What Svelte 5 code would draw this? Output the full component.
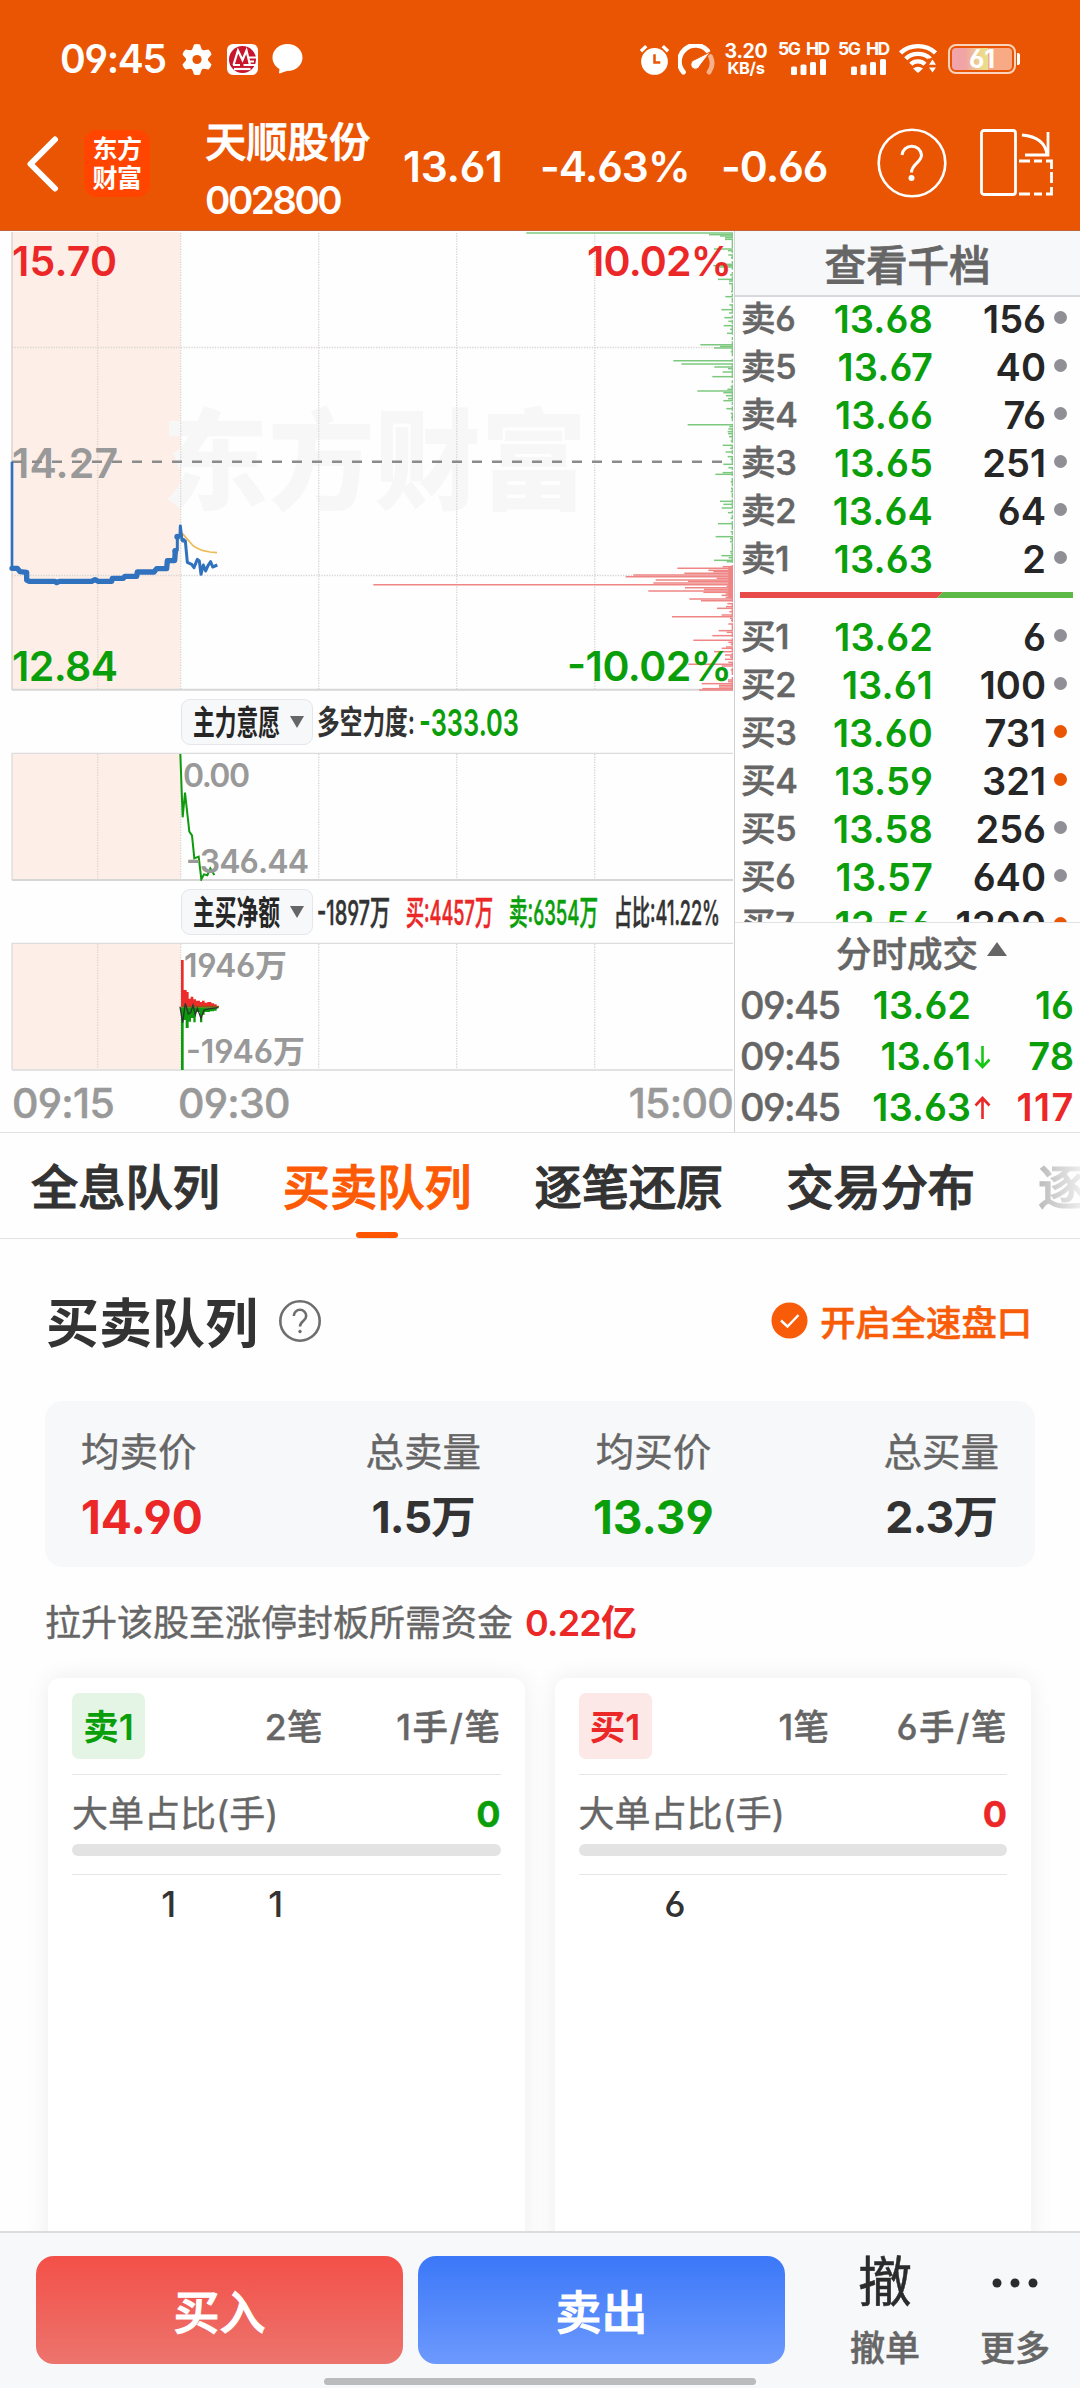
<script>
  const sells = [
    ['卖6', '13.68', '156'],
    ['卖5', '13.67', '40'],
    ['卖4', '13.66', '76'],
    ['卖3', '13.65', '251'],
    ['卖2', '13.64', '64'],
    ['卖1', '13.63', '2'],
  ];
  const buys = [
    ['买1', '13.62', '6'],
    ['买2', '13.61', '100'],
    ['买3', '13.60', '731', true],
    ['买4', '13.59', '321', true],
    ['买5', '13.58', '256'],
    ['买6', '13.57', '640'],
    ['买7', '13.56', '1300', true],
  ];
  const trades = [
    { price: '13.62', qty: '16', dir: '' },
    { price: '13.61', qty: '78', dir: 'down' },
    { price: '13.63', qty: '117', dir: 'up' },
  ];
  const tabs = ['全息队列', '买卖队列', '逐笔还原', '交易分布', '逐笔成交'];
  const stats = [
    [
      { label: '均卖价', value: '14.90', tone: 'red' },
      { label: '总卖量', value: '1.5万', tone: 'total' },
    ],
    [
      { label: '均买价', value: '13.39', tone: 'green' },
      { label: '总买量', value: '2.3万', tone: 'total' },
    ],
  ];
  const queues = [
    { side: 'sell', name: '卖1', count: '2笔', avg: '1手/笔', orders: ['1', '1'] },
    { side: 'buy', name: '买1', count: '1笔', avg: '6手/笔', orders: ['6'] },
  ];

  // Order depth bars: [y, left edge], in thirds of a pixel; the right edge is fixed.
  const askDepth = [
    [24, 499], [29, 1047], [33, 1080], [38, 1095], [43, 1095], [72, 1062], [77, 1104], [90, 1105], [98, 1113], [118, 1080], [122, 1060], [126, 1075], [150, 1110],
    [163, 1074], [168, 1107], [176, 1107], [200, 1113], [215, 1096], [240, 1108], [254, 1084], [264, 1107], [278, 1093], [289, 1105], [302, 1091],
    [313, 1110], [325, 1101], [359, 1021], [364, 1080], [369, 1062], [380, 1112], [407, 940], [417, 964], [426, 1063], [431, 1104], [441, 1088],
    [455, 1057], [485, 1112], [493, 1102], [498, 1012], [503, 1090], [512, 1098], [521, 1104], [527, 1090], [551, 1099], [565, 1112], [577, 1113], [599, 983], [605, 1108], [612, 1105], [620, 1103], [626, 1104],
    [635, 1107], [648, 1112], [661, 1088], [670, 1110], [681, 1097], [695, 1103], [703, 1112], [718, 1090], [728, 1105], [743, 1088], [748, 1066], [770, 1112], [790, 1113], [800, 1112],
    [829, 1080], [838, 1090], [849, 1085], [863, 1104], [880, 1112], [896, 1074], [920, 1112], [935, 1067], [941, 1110], [950, 1110], [980, 1110], [985, 1112], [992, 1084],
    [998, 1106], [1006, 1062], [1010, 1100],
  ];
  const bidDepth = [
    [1025, 1088], [1030, 952], [1036, 1045], [1040, 1060], [1045, 973], [1050, 820], [1055, 797], [1060, 1070], [1065, 887],
    [1069, 984], [1074, 880], [1079, 40], [1084, 1100], [1088, 975], [1093, 1032], [1098, 865], [1102, 1030], [1107, 1097], [1111, 1085], [1117, 1097],
    [1122, 988], [1127, 1023], [1136, 1102], [1145, 1098], [1150, 1071], [1160, 1108], [1170, 1085], [1175, 936], [1180, 1110], [1186, 1113], [1197, 1105], [1217, 1076],
    [1222, 1100], [1232, 1057], [1246, 1000], [1252, 1105], [1258, 1112], [1266, 1098], [1270, 1085], [1280, 1062], [1290, 1095], [1296, 1110], [1303, 1095], [1312, 1105], [1318, 985],
    [1323, 1085], [1335, 1112], [1365, 1104], [1370, 1104], [1376, 1025], [1381, 1077], [1386, 1077], [1391, 1027], [1395, 1017],
  ];
  const columns = [97.7, 180.7, 318.7, 456.7, 594.7];
</script>

{#snippet level(row)}
  <div class="level">
    <span class="lv-name">{row[0]}</span>
    <span class="lv-price">{row[1]}</span>
    <span class="lv-qty">{row[2]}</span>
    <i class="dot" class:hot={row[3]}></i>
  </div>
{/snippet}

{#snippet signal()}
  <div class="signal">
    <span>5G HD</span>
    <svg width="36" height="16" viewBox="0 0 36 16" fill="#fff">
      <rect x="0" y="7.500" width="6" height="8.500" rx="1.500" /><rect x="9.500" y="5.500" width="6" height="10.500" rx="1.500" />
      <rect x="19" y="3" width="6" height="13" rx="1.500" /><rect x="29" y="0" width="6" height="16" rx="1.500" />
    </svg>
  </div>
{/snippet}

{#snippet caption(text, width, height, size, tone)}
  <svg class="caption" {width} {height}>
    <text class={tone} x="0" y={height * 0.5 + size * 0.37} font-size={size} textLength={width} lengthAdjust="spacingAndGlyphs">{text}</text>
  </svg>
{/snippet}

<div class="screen">
  <header>
    <div class="status">
      <span class="clock">09:45</span>
      <svg class="gear" width="30" height="31" viewBox="-15 -15.500 30 31">
        <g fill="#fff">
          <circle r="11" />
          {#each [0, 60, 120, 180, 240, 300] as a}
            <path d="M-5.500-8L-3-15Q0-16 3-15L5.500-8Z" transform="rotate({a})" />
          {/each}
        </g>
        <circle r="4.600" fill="#ea5504" />
      </svg>
      <svg class="bank" width="31" height="31" viewBox="0 0 31 31">
        <rect width="31" height="31" rx="6" fill="#fff" />
        <circle cx="15.500" cy="15.500" r="13.500" fill="#c8152d" />
        <path d="M6.500 21L11 6.500L15.500 16L19.500 6.500L23 21" fill="none" stroke="#fff" stroke-width="2.200" />
        <path d="M6 21H13M16.500 21H29M22 13.500H30M22.500 17.500H27" fill="none" stroke="#fff" stroke-width="1.800" />
        <path d="M7 25H23.500" stroke="#fff" stroke-width="2.200" />
      </svg>
      <svg class="bubble" width="31" height="31" viewBox="0 0 31 31">
        <path d="M15.500 0C24 0 30.500 6 30.500 13.600S24 27 15.500 27Q13 27 8 29.500L7 29L7.500 25C3 22.500 .5 18.500 .5 13.600C.5 6 7 0 15.500 0Z" fill="#fff" />
      </svg>
      <div class="status-right">
        <svg class="alarm" width="31" height="31" viewBox="0 0 32 32">
          <circle cx="16" cy="18" r="13.800" fill="#fff" />
          <path d="M2 7.500L7.500 2.200M30 7.500L24.500 2.200" stroke="#fff" stroke-width="3.500" />
          <path d="M16 10.500V19H22" fill="none" stroke="#ea5504" stroke-width="2.600" />
        </svg>
        <svg class="gauge" width="37" height="31" viewBox="0 0 38 32">
          <path d="M5.500 29A16 16 0 0 1 30.500 7" fill="none" stroke="#fff" stroke-width="5" stroke-linecap="round" />
          <path d="M33.500 13A16 16 0 0 1 32 29" fill="none" stroke="#f7b08a" stroke-width="5" stroke-linecap="round" />
          <path d="M33.500 8L22.500 22.500A4.800 4.800 0 1 1 15.500 17Z" fill="#fff" stroke="#ea5504" stroke-width="1" />
        </svg>
        <div class="speed"><span>3.20</span><span class="unit">KB/s</span></div>
        {@render signal()}
        {@render signal()}
        <svg class="wifi" width="38" height="30" viewBox="0 0 38 32" preserveAspectRatio="none">
          <g fill="none" stroke="#fff" stroke-width="4.500">
            <path d="M1.500 9.500A25 25 0 0 1 36.500 9.500" /><path d="M6.800 15.800A17 17 0 0 1 31.200 15.800" /><path d="M11.800 21.500A10 10 0 0 1 26 21.500" />
          </g>
          <path d="M19 31L14 26.200Q19 22.500 24 26.200Z" fill="#fff" />
          <path d="M28.500 15.500H38V32H28.500Z" fill="#ea5504" />
          <path d="M33.500 16.500L37 22H30ZM33.500 30.500L37 25H30Z" fill="#fff" />
        </svg>
        <div class="battery"><span>61</span></div>
      </div>
    </div>
    <div class="titlebar">
      <svg class="back" width="34" height="56" viewBox="0 0 34 56"><path d="M29 3.500L4.500 28L29 52.500" fill="none" stroke="#fff" stroke-width="6" stroke-linecap="round" stroke-linejoin="round" /></svg>
      <div class="logo"><span>东方</span><span>财富</span></div>
      <div class="stock"><span class="name">天顺股份</span><span class="code">002800</span></div>
      <span class="q q1">13.61</span>
      <span class="q q2">-4.63%</span>
      <span class="q q3">-0.66</span>
      <svg class="help" width="70" height="70" viewBox="0 0 70 70">
        <circle cx="35" cy="35" r="33.300" fill="none" stroke="#fff" stroke-width="2.600" />
        <path d="M25 27A9.800 9.800 0 0 1 44.500 27C44.500 34.500 34.500 36 34.500 44.500" fill="none" stroke="#fff" stroke-width="3" />
        <circle cx="34.500" cy="50" r="3" fill="#fff" />
      </svg>
      <svg class="rotate" width="74" height="68" viewBox="0 0 74 68" fill="none" stroke="#fff" stroke-width="2.800">
        <rect x="1.500" y="1.500" width="34" height="64" rx="2.500" />
        <path d="M42 6Q65 8 67 26M68 3V26H45" />
        <path d="M39 32H50M54 32H62M66 32H71.500V40M71.500 43V54M71.500 58V65H66M62 65H54M50 65H39" />
      </svg>
    </div>
  </header>

  <section class="market">
    <div class="charts">
      <svg class="plot" width="734" height="461" viewBox="0 231 734 461">
        <rect x="12" y="232" width="168.500" height="458" fill="#fdeee7" />
        <text class="mark" x="162" y="501" font-size="109" textLength="425" lengthAdjust="spacingAndGlyphs">东方财富</text>
        <g class="grid">
          {#each columns as x}<path d="M{x} 233V690" />{/each}
          <path d="M12 347.500H733M12 575.500H733" />
        </g>
        <path d="M12 232V690" stroke="#d9d4d2" stroke-width="1.500" />
        <path d="M12 689.700H733" stroke="#d6d6d6" stroke-width="2" />
        <text class="axis faint" x="12" y="478" font-size="41" textLength="106">14.27</text>
        <path d="M12 461.700H733" stroke="#8b8b8b" stroke-width="2.400" stroke-dasharray="10 10" />
        <g transform="translate(360 225) scale(.33333)">
          <g stroke="#7cc87f" stroke-width="4.500">
            {#each askDepth as [y, x]}<path d="M{x} {y}H1119" />{/each}
            <path d="M1117 24V1015" stroke-dasharray="14 5 26 7 9 4" stroke-width="4" />
          </g>
          <g stroke="#f08585" stroke-width="4.500">
            {#each bidDepth as [y, x]}<path d="M{x} {y}H1119" />{/each}
            <path d="M1112 1024V1120" stroke-width="14" />
            <path d="M1117 1020V1397" stroke-dasharray="22 6 12 4" stroke-width="4" />
          </g>
        </g>
        <g transform="translate(0 225) scale(.33333)" fill="none" stroke-linejoin="round">
          <polyline points="547,925 560,940 580,963 595,971 610,977 630,981 651,983" stroke="#edbb55" stroke-width="5" />
          <polyline points="36,710 36,1030" stroke="#3072bd" stroke-width="8" />
          <polyline points="36,1030 52,1030 60,1040 80,1042 80,1065 88,1069 165,1069 170,1073 178,1069 275,1069 285,1064 295,1069 335,1069 337,1060 370,1060 375,1054 410,1054 412,1041 462,1041 470,1031 500,1031 502,1007 524,1007 526,978" stroke="#3072bd" stroke-width="16" stroke-linecap="round" />
          <polyline points="526,978 532,974 532,935 540,932 541,903 546,945 556,948 562,1012 575,1018 582,1028 592,1003 598,1008 603,1048 610,1020 617,1038 624,1022 632,1010 638,1026 652,1020" stroke="#3072bd" stroke-width="9" />
          <circle cx="532" cy="935" r="9" fill="#3072bd" /><circle cx="526" cy="978" r="9" fill="#3072bd" /><circle cx="550" cy="946" r="7" fill="#3072bd" />
        </g>
        <text class="axis up" x="12" y="276" font-size="41" textLength="105">15.70</text>
        <text class="axis down" x="12" y="681" font-size="41" textLength="106">12.84</text>
        <text class="axis up" x="587" y="276" font-size="41" textLength="145">10.02%</text>
        <text class="axis down" x="567" y="681" font-size="41" textLength="165">-10.02%</text>
      </svg>

      <div class="legend">
        <span class="pill">{@render caption('主力意愿', 87, 44, 34, 'ink')}<i class="caret"></i></span>
        {@render caption('多空力度:', 98, 44, 33, 'ink2')}
        {@render caption('-333.03', 100, 44, 37, 'down')}
      </div>

      <svg class="plot" width="734" height="129" viewBox="0 752 734 129">
        <rect x="12" y="753" width="168.500" height="127" fill="#fdeee7" />
        <g class="grid">{#each columns as x}<path d="M{x} 754V880" />{/each}</g>
        <path d="M12 880V753.300H733" fill="none" stroke="#dcdcdc" stroke-width="1.300" />
        <path d="M12 880H733" stroke="#d6d6d6" stroke-width="2" />
        <polyline points="541,192 548,382 555,308 568,425 576,436 583,505 596,500 604,568 612,553 622,556 631,535 643,555" transform="translate(0 690) scale(.33333)" fill="none" stroke="#0d9a0d" stroke-width="6" />
        <text class="axis faint" x="183" y="786.500" font-size="32" textLength="67">0.00</text>
        <text class="axis faint" x="186" y="873" font-size="32" textLength="123">-346.44</text>
      </svg>

      <div class="legend second">
        <span class="pill">{@render caption('主买净额', 87, 44, 34, 'ink')}<i class="caret"></i></span>
        {@render caption('-1897万', 73, 44, 34, 'ink2 thin')}
        {@render caption('买:4457万', 87, 44, 34, 'up thin')}
        {@render caption('卖:6354万', 89, 44, 34, 'down thin')}
        {@render caption('占比:41.22%', 106, 44, 34, 'ink2 thin')}
      </div>

      <svg class="plot" width="734" height="129" viewBox="0 942 734 129">
        <rect x="12" y="943" width="168.500" height="127" fill="#fdeee7" />
        <g class="grid">{#each columns as x}<path d="M{x} 944V1070" />{/each}</g>
        <path d="M12 1070V943.300H733" fill="none" stroke="#dcdcdc" stroke-width="1.300" />
        <path d="M12 1070H733" stroke="#e2e2e2" stroke-width="2" />
        <text class="axis faint" x="184" y="976.500" font-size="32" textLength="103">1946万</text>
        <text class="axis faint" x="186" y="1063" font-size="32" textLength="119">-1946万</text>
        <g transform="translate(0 690) scale(.33333)">
          <path d="M543 950V810H551V900H560V906H566V926H572V920H580V928H588V932H600V936H606V932H614V938H622V936H634V940H642V943H650V950Z" fill="#ee2b2b" />
          <path d="M543 952V1140H551V990H557V1014H566V995H573V984H580V997H587V966H600V997H607V974H614V966H630V964H642V962H650V956L657 952Z" fill="#0d9a0d" />
          <path d="M545 950H657" stroke="#96550f" stroke-width="5" />
          <polyline points="540,950 548,998 556,940 565,972 572,968 579,945 586,975 592,955 603,985 612,960 630,956 655,953" fill="none" stroke="#26382a" stroke-width="4" />
        </g>
      </svg>

      <div class="times"><span class="t1">09:15</span><span>09:30</span><span class="t3">15:00</span></div>
    </div>

    <aside>
      <div class="book-head">查看千档</div>
      <div class="book">
        {#each sells as row}{@render level(row)}{/each}
        <svg class="ratio" width="333" height="6" viewBox="0 0 333 6"><path d="M0 0H203L197 6H0Z" fill="#e84a4a" /><path d="M203 0H333V6H197Z" fill="#5cb946" /></svg>
        {#each buys as row}{@render level(row)}{/each}
      </div>
      <div class="ticks">
        <div class="ticks-head">分时成交<i></i></div>
        {#each trades as t}
          <div class="tick">
            <span class="tk-time">09:45</span>
            <span class="tk-price">{t.price}</span>
            <svg width="17" height="26" viewBox="0 0 17 26" fill="none" stroke-width="2.600">
              {#if t.dir === 'down'}<path d="M8.500 2V23M1.500 15.500L8.500 23L15.500 15.500" stroke="#14c814" />{/if}
              {#if t.dir === 'up'}<path d="M8.500 24V3M1.500 10.500L8.500 3L15.500 10.500" stroke="#eb2727" />{/if}
            </svg>
            <span class="tk-qty" class:rise={t.dir === 'up'}>{t.qty}</span>
          </div>
        {/each}
      </div>
    </aside>
  </section>

  <nav>
    {#each tabs as tab, i}
      <span class="tab" class:active={i === 1} class:last={i === 4}>{tab}</span>
    {/each}
  </nav>

  <main>
    <div class="heading">
      <h2>买卖队列</h2>
      <svg width="44" height="44" viewBox="0 0 44 44" fill="none" stroke="#6e6e6e" stroke-width="2.600">
        <circle cx="22" cy="22" r="19.700" />
        <path d="M15.800 17A6.200 6.200 0 0 1 28.200 17C28.200 22 22 22 22 27.500" /><circle cx="22" cy="32.500" r="1.300" fill="#6e6e6e" stroke-width="1" />
      </svg>
      <div class="fast">
        <svg width="37" height="37" viewBox="0 0 37 37"><circle cx="18.500" cy="18.500" r="18" fill="#f85c08" /><path d="M10 18.500L16.500 24.500L27.500 13" fill="none" stroke="#fff" stroke-width="2.400" /></svg>
        <span>开启全速盘口</span>
      </div>
    </div>

    <div class="stats">
      {#each stats as half}
        <div class="half">
          {#each half as s}
            <div class="stat"><span class="s-label">{s.label}</span><span class="s-value {s.tone}">{s.value}</span></div>
          {/each}
        </div>
      {/each}
    </div>

    <p class="fund">拉升该股至涨停封板所需资金<b>0.22亿</b></p>

    <div class="queues">
      {#each queues as q}
        <article class={q.side}>
          <div class="q-head"><span class="badge">{q.name}</span><span class="count">{q.count}</span><span class="avg">{q.avg}</span></div>
          <div class="big"><span>大单占比(手)</span><b>0</b></div>
          <div class="track"></div>
          <div class="orders">{#each q.orders as o}<span>{o}</span>{/each}</div>
        </article>
      {/each}
    </div>
  </main>

  <footer>
    <button class="btn buy-btn">买入</button>
    <button class="btn sell-btn">卖出</button>
    <div class="act cancel"><span class="glyph">撤</span><span>撤单</span></div>
    <div class="act more"><svg width="54" height="60" viewBox="0 0 54 60" fill="#2b2b2b"><circle cx="9" cy="31" r="4.500" /><circle cx="27" cy="31" r="4.500" /><circle cx="45" cy="31" r="4.500" /></svg><span>更多</span></div>
    <div class="home"></div>
  </footer>
</div>

<style>
  :global(body) { margin: 0; background: #fefefe; }
  .screen {
    width: 1080px; height: 2388px; overflow: hidden; display: flex; flex-direction: column;
    background: #fefefe; color: #333; position: relative;
    font-family: Inter, "Noto Sans CJK SC", sans-serif; font-weight: 500;
    font-feature-settings: "cv03", "cv04"; white-space: nowrap;
  }
  svg { display: block; flex: none; }
  span, b { flex: none; }

  header { height: 231px; flex: none; background: #ea5504; color: #fff; box-sizing: border-box; border-bottom: 1px solid #c06535; }
  .status { height: 76px; padding: 40px 64px 0 60px; display: flex; align-items: flex-start; box-sizing: border-box; }
  .clock { font-size: 39px; line-height: 38px; width: 122px; font-weight: 600; letter-spacing: -1.3px; }
  .gear { margin-top: 4px; }
  .bank { margin: 4px 0 0 15px; }
  .bubble { margin: 4px 0 0 14px; }
  .status-right { margin-left: auto; display: flex; align-items: flex-start; }
  .alarm { margin-top: 4px; }
  .gauge { margin: 4px 0 0 8px; }
  .speed { margin: 2px 0 0 10px; width: 42px; display: flex; flex-direction: column; align-items: center; font-size: 19.5px; line-height: 18px; font-weight: 700; letter-spacing: -.3px; }
  .speed .unit { font-size: 16.500px; line-height: 17px; }
  .signal { width: 60px; display: flex; flex-direction: column; align-items: flex-end; box-sizing: border-box; }
  .signal span { font-size: 17.5px; line-height: 18px; font-weight: 700; width: 49px; letter-spacing: -1.5px; word-spacing: 4px; }
  .signal svg { margin-top: 1px; }
  .wifi { margin: 4px 0 0 12px; }
  .battery {
    margin: 4px 0 0 11px; width: 68px; height: 30px; box-sizing: border-box; border: 2px solid #fbd3bd; border-radius: 8px; padding: 2px;
    position: relative; display: flex;
  }
  .battery::after { content: ''; position: absolute; right: -6px; top: 7px; width: 3px; height: 12px; background: #fff; border-radius: 0 2px 2px 0; }
  .battery span {
    flex: 1; background: linear-gradient(90deg, #f1a4ac 0, #f1a4a4 22%, #ecd98c 50%, #e6e08c 60%, #f8aa84 60%); border-radius: 4px;
    font-size: 25px; line-height: 23px; font-weight: 700; text-align: center;
  }

  .titlebar { height: 154px; display: flex; align-items: flex-start; padding-left: 26px; box-sizing: border-box; }
  .back { margin-top: 60px; }
  .logo { margin: 54px 0 0 24px; width: 66px; height: 67px; background: #ff4500; border-radius: 13px; display: flex; flex-direction: column; align-items: center; justify-content: center; font-size: 25px; line-height: 30px; font-weight: 700; letter-spacing: -.5px; }
  .logo span { margin-top: -1px; }
  .stock { margin: 41px 0 0 55px; width: 198px; display: flex; flex-direction: column; }
  .name { font-size: 41.3px; line-height: 50px; -webkit-text-stroke: .8px; }
  .code { font-size: 38.5px; line-height: 42px; margin-top: 12px; letter-spacing: -2.5px; font-weight: 600; }
  .q { font-size: 42.5px; line-height: 50px; margin-top: 66px; letter-spacing: -1px; font-weight: 600; }
  .q1 { width: 137px; letter-spacing: -.3px; }
  .q2 { width: 181px; }
  .q3 { width: 156px; }
  .help { margin-top: 52px; }
  .rotate { margin: 53px 0 0 33px; }

  .market { display: flex; height: 902px; flex: none; border-bottom: 1.5px solid #e2e2e2; box-sizing: border-box; }
  .charts { width: 734px; flex: none; display: flex; flex-direction: column; }
  .grid path { stroke: #d9d5d3; stroke-width: 1.300; stroke-dasharray: 1.300 1.300; fill: none; }
  .mark { fill: #f7f7f7; font-weight: 900; }
  .axis { font-weight: 600; }
  .faint { fill: #999; }
  .up { fill: #eb2727; }
  .down { fill: #0a9f0a; }
  .ink { fill: #262626; }
  .ink2 { fill: #333; }
  .caption { overflow: visible; }
  .caption text { font-weight: 600; }
  .caption .thin { font-weight: 500; stroke-width: .6px; }
  .thin.ink2 { stroke: #333; }
  .thin.up { stroke: #eb2727; }
  .thin.down { stroke: #0a9f0a; }
  .legend { height: 60px; flex: none; padding: 0 0 0 181px; display: flex; align-items: center; gap: 4px; box-sizing: border-box; }
  .legend.second { height: 61px; gap: 16px; }
  .legend.second .pill { margin-right: -12px; }
  .pill { display: flex; align-items: center; width: 132px; height: 46px; box-sizing: border-box; border: 1.5px solid #e4e6ec; border-radius: 9px; background: #f7f8fa; padding-left: 11px; gap: 10px; }
  .caret { border: 7px solid transparent; border-top: 12px solid #666; border-bottom: 0; }
  .times { padding: 11px 1px 0 12px; display: flex; color: #999; font-size: 41px; line-height: 42px; letter-spacing: -.7px; -webkit-text-stroke: .5px; }
  .times .t1 { width: 166px; }
  .times .t3 { margin-left: auto; }

  aside { flex: 1; border-left: 1.5px solid #cfd1d4; display: flex; flex-direction: column; min-width: 0; }
  .book-head { height: 66px; flex: none; box-sizing: border-box; background: #f7f8fa; border-bottom: 2px solid #d5d8dc; text-align: center; font-size: 41.5px; line-height: 70px; color: #666; -webkit-text-stroke: .8px; }
  .book { height: 625px; flex: none; overflow: hidden; }
  .level { height: 48px; display: flex; align-items: center; font-size: 38px; line-height: 48px; padding-left: 6px; }
  .level:first-child { margin-top: -2px; }
  .lv-name { color: #666; width: 60px; font-size: 34.5px; letter-spacing: -.3px; -webkit-text-stroke: .6px; }
  .lv-price { color: #0a9f0a; width: 132px; text-align: right; font-weight: 600; letter-spacing: .1px; }
  .lv-qty { color: #262626; flex: 1; text-align: right; font-weight: 600; }
  .dot { width: 13px; height: 13px; border-radius: 50%; background: #908f95; margin: 0 13px 3px 8px; }
  .dot.hot { background: #ea5504; }
  .ratio { margin: 9px 0 15px 5px; }
  .ticks { border-top: 1.5px solid #e2e2e2; flex: none; }
  .ticks-head { height: 57px; display: flex; align-items: center; padding-left: 101px; font-size: 35.500px; color: #666; -webkit-text-stroke: .5px; }
  .ticks-head i { border: 10.500px solid transparent; border-bottom: 14px solid #666; border-top: 0; margin: 0 0 6px 9px; }
  .tick { height: 51px; display: flex; align-items: center; padding: 0 6px 0 5px; font-size: 38px; line-height: 51px; }
  .tk-time { color: #666; width: 104px; letter-spacing: -1.5px; -webkit-text-stroke: .5px; }
  .tk-price { color: #0a9f0a; width: 127px; text-align: right; font-weight: 600; }
  .tick svg { margin-left: 3px; }
  .tk-qty { flex: 1; text-align: right; color: #0a9f0a; font-weight: 600; }
  .tk-qty.rise { color: #eb2727; letter-spacing: 1.5px; margin-right: -1px; }

  nav { height: 106px; flex: none; box-sizing: border-box; border-bottom: 1.5px solid #e4e4e4; display: flex; padding-left: 31px; gap: 63px; overflow: hidden; font-size: 47.2px; font-weight: 500; -webkit-text-stroke: 1.100px; }
  .tab { position: relative; line-height: 110px; height: 105px; }
  .tab.active { color: #fd5a05; }
  .tab.active::after { content: ''; position: absolute; left: 50%; margin-left: -21px; bottom: 0; width: 42px; height: 6px; border-radius: 3px; background: #ff5500; }
  .tab.last { background: linear-gradient(90deg, #bbb 0, #eee 44px); background-clip: text; color: transparent; }

  main { flex: 1; padding: 0 45px; overflow: hidden; min-height: 0; }
  .heading { margin-top: 50px; height: 70px; display: flex; align-items: center; }
  h2 { margin: -1px 0 0 1px; font-size: 53px; line-height: 66px; font-weight: 700; }
  .heading > svg { margin: -7px 0 0 20px; }
  .fast { margin: -7px 3px 0 auto; display: flex; align-items: center; gap: 12px; font-size: 35.3px; color: #f85c08; -webkit-text-stroke: .6px; }
  .fast span { margin-top: -1px; }
  .stats { margin-top: 42px; height: 166px; border-radius: 18px; background: #f7f8fa; display: flex; justify-content: space-between; padding: 0 36px; box-sizing: border-box; }
  .half { width: 406px; display: flex; justify-content: space-between; }
  .half:first-child { width: 400px; }
  .stat { display: flex; flex-direction: column; align-items: center; }
  .half:first-child .stat:first-child { align-items: flex-start; }
  .s-label { margin-top: 23px; font-size: 38.500px; line-height: 56px; color: #666; font-weight: 400; -webkit-text-stroke: .4px; }
  .s-value { font-size: 46px; line-height: 50px; margin-top: 12px; font-weight: 700; }
  .s-value.total { font-size: 44.5px; letter-spacing: -.8px; }
  .stat:has(.total) { align-items: center; }
  .red { color: #eb2727; }
  .green { color: #0a9f0a; }
  .fund { margin: 32px 0 0 0; font-size: 36px; line-height: 48px; color: #666; font-weight: 400; -webkit-text-stroke: .4px; }
  .fund b { margin-left: 12px; font-weight: 600; color: #eb2727; letter-spacing: -.8px; -webkit-text-stroke: 0; }
  .queues { display: flex; gap: 30px; padding: 0 4px 0 3px; margin-top: 31px; }
  article { flex: 1; height: 620px; padding: 15px 24px 0; background: #fff; border-radius: 12px; box-shadow: 0 0 24px rgba(0, 0, 0, .07); box-sizing: border-box; }
  .q-head { height: 81px; display: flex; align-items: flex-start; font-size: 35.5px; line-height: 70px; color: #666; border-bottom: 1.5px solid #e6e6e6; -webkit-text-stroke: .4px; }
  .badge { width: 73px; height: 66px; border-radius: 7px; text-align: center; font-weight: 600; -webkit-text-stroke: 0; }
  .sell .badge { background: #e5f5e5; color: #0a9f0a; }
  .buy .badge { background: #fde8e8; color: #eb2727; }
  .count { width: 178px; text-align: right; letter-spacing: .4px; }
  .avg { flex: 1; text-align: right; letter-spacing: 1.6px; margin-right: -1px; }
  .big { display: flex; justify-content: space-between; font-size: 36px; line-height: 78px; height: 69px; color: #666; font-weight: 400; -webkit-text-stroke: .4px; }
  .big b { font-weight: 700; font-size: 36px; }
  .sell .big b { color: #0a9f0a; }
  .buy .big b { color: #eb2727; }
  .track { height: 12px; border-radius: 6px; background: #e3e3e3; }
  .orders { margin-top: 18px; border-top: 1.5px solid #e6e6e6; display: grid; grid-template-columns: repeat(4, 1fr); text-align: right; font-size: 36px; line-height: 58px; }
  .orders span { padding-right: 3px; }
  .buy .orders span { padding-right: 0; }

  footer { position: relative; height: 157px; flex: none; box-sizing: border-box; border-top: 2px solid #dcdcde; background: #f7f8fa; display: flex; padding: 23px 0 0 36px; }
  .btn { width: 367px; height: 108px; border: 0; border-radius: 18px; margin: 0 15px 0 0; padding: 0 0 3px; font: inherit; font-size: 46px; color: #fff; font-weight: 500; -webkit-text-stroke: 1.100px; }
  .buy-btn { background: linear-gradient(#f35048, #ec746d); }
  .sell-btn { background: linear-gradient(#3b78f8, #6d99fd); }
  .act { display: flex; flex-direction: column; align-items: center; font-size: 35px; line-height: 44px; color: #666; -webkit-text-stroke: .5px; }
  .act .glyph { font-size: 54px; line-height: 54px; color: #2b2b2b; font-weight: 400; }
  .cancel { margin-left: 50px; width: 70px; }
  .cancel span:last-child { margin-top: 16px; }
  .more { margin-left: 60px; width: 70px; margin-top: -4px; }
  .more span { margin-top: 14px; }
  .home { position: absolute; left: 324px; top: 145px; width: 432px; height: 7px; border-radius: 4px; background: #babbbd; }
</style>
